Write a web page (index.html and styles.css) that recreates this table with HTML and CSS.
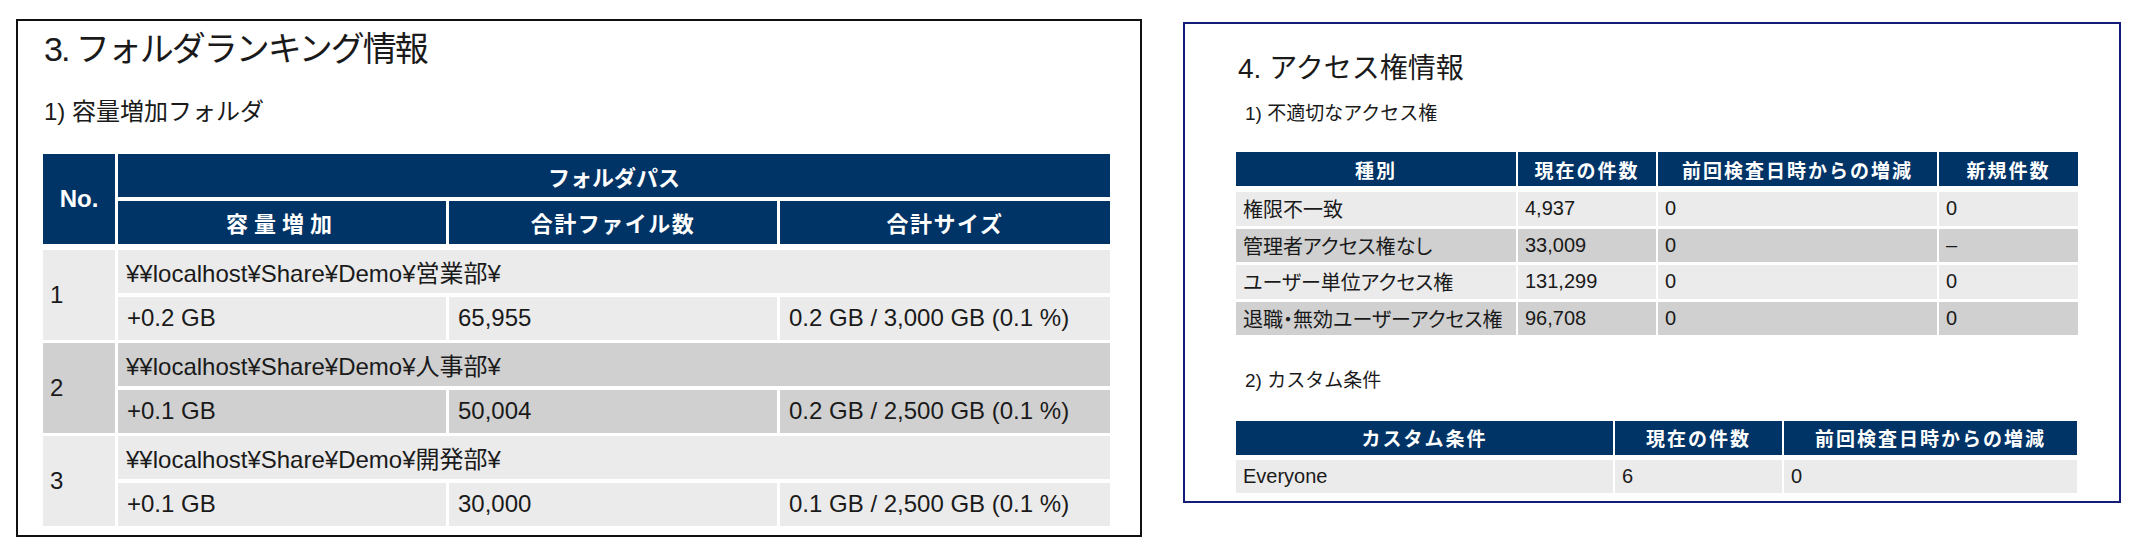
FILE: index.html
```html
<!DOCTYPE html>
<html lang="ja">
<head>
    <meta charset="UTF-8">
    <title>レポート - フォルダランキング / アクセス権</title>
    <link rel="stylesheet" href="styles.css">
</head>
<body>
    <div class="page">

        <!-- 3. フォルダランキング -->
        <section class="panel panel-ranking">
            <h2 class="panel-title">3. フォルダランキング情報</h2>
            <h3 class="panel-sub">1) 容量増加フォルダ</h3>

            <div class="rank-head">
                <div class="th th-no">No.</div>
                <div class="th th-path">フォルダパス</div>
                <div class="th wide">容量増加</div>
                <div class="th">合計ファイル数</div>
                <div class="th">合計サイズ</div>
            </div>

            <div class="rank-body">
                <div class="td td-no">1</div>
                <div class="td td-path">¥¥localhost¥Share¥Demo¥営業部¥</div>
                <div class="td">+0.2 GB</div>
                <div class="td">65,955</div>
                <div class="td">0.2 GB / 3,000 GB (0.1 %)</div>

                <div class="td td-no alt">2</div>
                <div class="td td-path alt">¥¥localhost¥Share¥Demo¥人事部¥</div>
                <div class="td alt">+0.1 GB</div>
                <div class="td alt">50,004</div>
                <div class="td alt">0.2 GB / 2,500 GB (0.1 %)</div>

                <div class="td td-no">3</div>
                <div class="td td-path">¥¥localhost¥Share¥Demo¥開発部¥</div>
                <div class="td">+0.1 GB</div>
                <div class="td">30,000</div>
                <div class="td">0.1 GB / 2,500 GB (0.1 %)</div>
            </div>
        </section>

        <!-- 4. アクセス権 -->
        <section class="panel panel-access">
            <h2 class="panel-title">4. アクセス権情報</h2>
            <h3 class="panel-sub">1) 不適切なアクセス権</h3>

            <div class="acl-head">
                <div class="th">種別</div>
                <div class="th">現在の件数</div>
                <div class="th">前回検査日時からの増減</div>
                <div class="th">新規件数</div>
            </div>
            <div class="acl-body">
                <div class="td">権限不一致</div>
                <div class="td">4,937</div>
                <div class="td">0</div>
                <div class="td">0</div>

                <div class="td alt">管理者アクセス権なし</div>
                <div class="td alt">33,009</div>
                <div class="td alt">0</div>
                <div class="td alt">–</div>

                <div class="td">ユーザー単位アクセス権</div>
                <div class="td">131,299</div>
                <div class="td">0</div>
                <div class="td">0</div>

                <div class="td alt">退職・無効ユーザーアクセス権</div>
                <div class="td alt">96,708</div>
                <div class="td alt">0</div>
                <div class="td alt">0</div>
            </div>

            <h3 class="panel-sub sub-2">2) カスタム条件</h3>

            <div class="custom-head">
                <div class="th">カスタム条件</div>
                <div class="th">現在の件数</div>
                <div class="th">前回検査日時からの増減</div>
            </div>
            <div class="custom-body">
                <div class="td">Everyone</div>
                <div class="td">6</div>
                <div class="td">0</div>
            </div>
        </section>

    </div>
</body>
</html>
```

FILE: styles.css
```css
:root {
    --navy: #003366;
    --row-light: #ebebeb;
    --row-dark: #d0d0d0;
    --text: #1a1a1a;
}

body {
    margin: 0;
    background: #fff;
    color: var(--text);
    font-family: "Liberation Sans", "Noto Sans CJK JP", sans-serif;
}

.page {
    display: flex;
    align-items: flex-start;
    gap: 41px;
    padding-left: 16px;
}

/* パネル共通 */
.panel {
    box-sizing: border-box;
    background: #fff;
}

.panel-title,
.panel-sub {
    margin: 0;
    font-weight: normal;
    white-space: nowrap;
}

.th {
    background: var(--navy);
    color: #fff;
    font-family: "Noto Sans CJK JP", sans-serif;
    font-weight: bold;
    display: flex;
    align-items: center;
    justify-content: center;
    white-space: nowrap;
}

.td {
    background: var(--row-light);
    display: flex;
    align-items: center;
    white-space: nowrap;
}

.td.alt {
    background: var(--row-dark);
}

/* 3. フォルダランキング */
.panel-ranking {
    width: 1126px;
    height: 518px;
    margin-top: 19px;
    border: 2px solid #111;
    padding: 7px 30px 0 25px;
}

.panel-ranking .panel-title {
    font-size: 34px;
    line-height: 42px;
    letter-spacing: -2px;
    margin-left: 1px;
}

.panel-ranking .panel-sub {
    font-size: 24px;
    line-height: 30px;
    margin: 27px 0 0 1px;
}

.rank-head,
.rank-body {
    display: grid;
    grid-template-columns: 72px 328px 328px 330px;
    column-gap: 3px;
}

.rank-head {
    margin-top: 27px;
    grid-template-rows: 43px 43px;
    row-gap: 3.5px;
}

.rank-head .th {
    font-size: 22px;
    letter-spacing: 1.5px;
}

.rank-head .th.wide {
    letter-spacing: 6px;
}

.rank-head .th-no {
    grid-row: span 2;
    font-family: "Liberation Sans", sans-serif;
    font-size: 24px;
    letter-spacing: 0;
}

.rank-head .th-path {
    grid-column: span 3;
    letter-spacing: 0;
}

.rank-body {
    margin-top: 6.5px;
    grid-auto-rows: 43px;
    row-gap: 3.5px;
}

.rank-body .td {
    font-size: 24px;
    padding-left: 9px;
}

.rank-body .td-no {
    grid-row: span 2;
    padding-left: 7px;
}

.rank-body .td-path {
    grid-column: span 3;
    padding-left: 8px;
}

/* 4. アクセス権 */
.panel-access {
    width: 938px;
    height: 481px;
    margin-top: 22px;
    border: 2px solid #141c7a;
    padding: 27px 0 0 51px;
}

.panel-access .panel-title {
    font-size: 28px;
    line-height: 36px;
    margin-left: 2px;
}

.panel-access .panel-sub {
    font-size: 19px;
    line-height: 26px;
    margin: 14px 0 0 9px;
}

.panel-access .sub-2 {
    margin-top: 33px;
}

.acl-head,
.acl-body {
    display: grid;
    grid-template-columns: 280px 138px 279px 139px;
    column-gap: 2px;
}

.custom-head,
.custom-body {
    display: grid;
    grid-template-columns: 377px 167px 293px;
    column-gap: 2px;
}

.acl-head {
    margin-top: 25px;
    grid-template-rows: 34px;
}

.custom-head {
    margin-top: 27px;
    grid-template-rows: 33.5px;
}

.acl-head .th,
.custom-head .th {
    font-size: 19px;
    letter-spacing: 2px;
}

.acl-body {
    margin-top: 6px;
    grid-auto-rows: 33.5px;
    row-gap: 3px;
}

.custom-body {
    margin-top: 5.5px;
    grid-auto-rows: 33px;
}

.acl-body .td,
.custom-body .td {
    font-family: "Liberation Sans Narrow", "Liberation Sans", "Noto Sans CJK JP", sans-serif;
    font-feature-settings: "palt";
    font-size: 20px;
    padding-left: 7px;
}
```
